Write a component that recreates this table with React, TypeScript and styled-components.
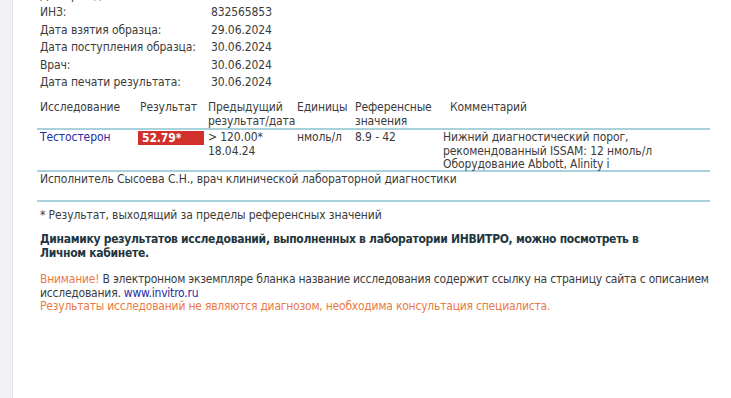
import { Fragment } from 'react';
import styled, { createGlobalStyle } from 'styled-components';

const Global = createGlobalStyle`
  body {
    margin: 0;
    background: #fff;
    font-family: 'DejaVu Sans Condensed', 'DejaVu Sans', sans-serif;
    font-size: 12px;
    letter-spacing: -0.1px;
    color: #3b3b3b;
  }
`;

const Page = styled.div`
  display: flex;
  height: 398px;
  overflow: hidden;
`;

const Gutter = styled.div`
  width: 12px;
  flex-shrink: 0;
  background: #f1f1f4;
  border-right: 1px solid #e4e4ea;
`;

const Sheet = styled.div`
  width: 673px;
  padding-left: 24px;
  margin-top: -13px;
`;

const Info = styled.div`
  display: grid;
  grid-template-columns: 171px auto;
  padding-left: 3px;
  line-height: 17.4px;
`;

const Table = styled.div`
  margin-top: 9px;
`;

const Row = styled.div<{ $head?: boolean }>`
  display: grid;
  grid-template-columns: 100px 68px 89px 58px 88px 1fr;
  line-height: ${p => (p.$head ? '14px' : '13.5px')};
  height: ${p => (p.$head ? '28px' : '39px')};
  padding-top: ${p => (p.$head ? '0' : '1px')};
  border-bottom: 2px solid #a9d1db;
`;

const Cell = styled.div<{ $shift?: number }>`
  padding-left: ${p => 3 + (p.$shift || 0)}px;
  white-space: pre;
`;

const Name = styled(Cell)`
  color: #2a2aa6;
`;

const Flag = styled.div`
  background: #d2302c;
  color: #fff;
  font-weight: bold;
  height: 14px;
  line-height: 14px;
  padding-left: 4px;
  margin: 0 1px;
`;

const Performer = styled.div`
  padding: 0 3px;
  height: 28px;
  line-height: 14px;
  border-bottom: 2px solid #a9d1db;
`;

const Note = styled.p`
  margin: 6px 0 0 3px;
  line-height: 14px;
`;

const Bold = styled.p`
  margin: 10px 0 0 3px;
  font-weight: bold;
  color: #1f3640;
  line-height: 14px;
  letter-spacing: -0.3px;
  white-space: nowrap;
`;

const Notice = styled.p`
  margin: 13px 0 0 3px;
  line-height: 13.5px;
  letter-spacing: -0.22px;
  white-space: nowrap;
`;

const Orange = styled.span`
  color: #ea7a45;
`;

const Link = styled.span`
  color: #2a2aa6;
`;

const info: [string, string][] = [
  ['Дата рождения:', '01.01.1980'],
  ['ИНЗ:', '832565853'],
  ['Дата взятия образца:', '29.06.2024'],
  ['Дата поступления образца:', '30.06.2024'],
  ['Врач:', '30.06.2024'],
  ['Дата печати результата:', '30.06.2024'],
];

export default function App() {
  return (
    <Page>
      <Global />
      <Gutter />
      <Sheet>
        <Info>
          {info.map(([k, v]) => (
            <Fragment key={k}>
              <div>{k}</div>
              <div>{v}</div>
            </Fragment>
          ))}
        </Info>
        <Table>
          <Row $head>
            <Cell>Исследование</Cell>
            <Cell>Результат</Cell>
            <Cell>{'Предыдущий\nрезультат/дата'}</Cell>
            <Cell>Единицы</Cell>
            <Cell>{'Референсные\nзначения'}</Cell>
            <Cell $shift={7}>Комментарий</Cell>
          </Row>
          <Row>
            <Name>Тестостерон</Name>
            <Flag>52.79*</Flag>
            <Cell>{'> 120.00*\n18.04.24'}</Cell>
            <Cell>нмоль/л</Cell>
            <Cell>8.9 - 42</Cell>
            <Cell>
              {'Нижний диагностический порог,\nрекомендованный ISSAM: 12 нмоль/л\nОборудование Abbott, Alinity i'}
            </Cell>
          </Row>
          <Performer>Исполнитель Сысоева С.Н., врач клинической лабораторной диагностики</Performer>
        </Table>
        <Note>* Результат, выходящий за пределы референсных значений</Note>
        <Bold>
          Динамику результатов исследований, выполненных в лаборатории ИНВИТРО, можно посмотреть в
          <br />
          Личном кабинете.
        </Bold>
        <Notice>
          <Orange>Внимание!</Orange> В электронном экземпляре бланка название исследования содержит ссылку на страницу
          сайта с описанием
          <br />
          исследования. <Link>www.invitro.ru</Link>
          <br />
          <Orange>Результаты исследований не являются диагнозом, необходима консультация специалиста.</Orange>
        </Notice>
      </Sheet>
    </Page>
  );
}
